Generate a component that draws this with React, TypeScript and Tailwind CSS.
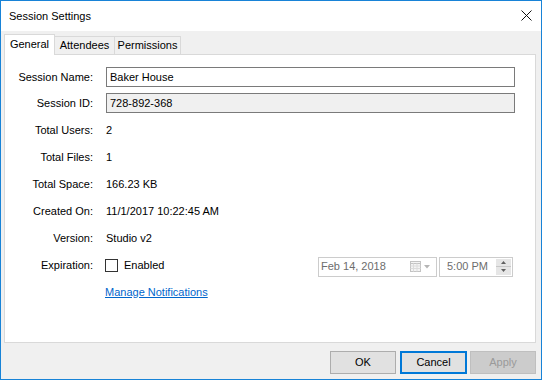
import React from "react";

const F = "font-['Liberation_Sans',Arial,sans-serif]";

function Row({ label, children, className = "" }: { label: string; children?: React.ReactNode; className?: string }) {
  return (
    <div className={`flex items-center h-[20px] ${className}`}>
      <div className="w-[88px] text-right shrink-0 leading-[20px]">{label}</div>
      <div className="ml-[13px] flex-1 flex items-center h-full">{children}</div>
    </div>
  );
}

function CalendarIcon() {
  return (
    <svg width="11" height="11" viewBox="0 0 11 11">
      <rect x="0.5" y="0.5" width="10" height="10" fill="#f4f4f4" stroke="#c3c3c3" />
      <line x1="0.5" y1="2.5" x2="10.5" y2="2.5" stroke="#c3c3c3" />
      <line x1="0.5" y1="5" x2="10.5" y2="5" stroke="#dcdcdc" />
      <line x1="0.5" y1="7.5" x2="10.5" y2="7.5" stroke="#dcdcdc" />
      <line x1="3.5" y1="2.5" x2="3.5" y2="10.5" stroke="#dcdcdc" />
      <line x1="7" y1="2.5" x2="7" y2="10.5" stroke="#dcdcdc" />
    </svg>
  );
}

export default function App() {
  return (
    <div className={`${F} text-[11px] text-black w-[542px] h-[380px] border border-[#1883d7] bg-[#f0f0f0] flex flex-col overflow-hidden`}>
      {/* Title bar */}
      <div className="h-[30px] bg-white flex items-center justify-between pl-[8px] pr-[9px] shrink-0">
        <span className="text-[11px] leading-none">Session Settings</span>
        <svg width="11" height="11" viewBox="0 0 11 11" className="mt-[-1px]">
          <line x1="0.5" y1="0.5" x2="10.5" y2="10.5" stroke="#111" strokeWidth="1" />
          <line x1="10.5" y1="0.5" x2="0.5" y2="10.5" stroke="#111" strokeWidth="1" />
        </svg>
      </div>

      {/* Tabs */}
      <div className="h-[23px] flex items-end pl-[3px] shrink-0">
        <div className="relative z-10 w-[51px] h-[21px] mb-[-1px] bg-white border-l border-t border-r border-[#d9d9d9] flex items-center justify-center pb-[2px]">
          General
        </div>
        <div className="w-[60px] h-[18px] bg-[#f0f0f0] border-t border-r border-[#d9d9d9] flex items-center justify-center">
          Attendees
        </div>
        <div className="w-[66px] h-[18px] bg-[#f0f0f0] border-t border-r border-[#d9d9d9] flex items-center justify-center">
          Permissions
        </div>
      </div>

      {/* Panel */}
      <div className="ml-[3px] w-[532px] h-[289px] bg-white border border-[#d9d9d9] shrink-0 pt-[12px] pr-[20px] flex flex-col">
        <Row label="Session Name:">
          <div className="w-full h-[20px] border border-[#7a7a7a] bg-white pl-[3px] flex items-center">Baker House</div>
        </Row>
        <Row label="Session ID:" className="mt-[6px]">
          <div className="w-full h-[20px] border border-[#7a7a7a] bg-[#f0f0f0] pl-[3px] flex items-center">728-892-368</div>
        </Row>
        <Row label="Total Users:" className="mt-[7px]">2</Row>
        <Row label="Total Files:" className="mt-[7px]">1</Row>
        <Row label="Total Space:" className="mt-[7px]">166.23 KB</Row>
        <Row label="Created On:" className="mt-[7px]">11/1/2017 10:22:45 AM</Row>
        <Row label="Version:" className="mt-[7px]">Studio v2</Row>
        <Row label="Expiration:" className="mt-[7px]">
          <div className="flex items-center ml-[-1px]">
            <div className="w-[13px] h-[13px] border border-[#333333] bg-white" />
            <span className="ml-[6px]">Enabled</span>
          </div>
          <div className="ml-auto mr-[2px] mt-[3px] flex gap-[2px]">
            <div className="w-[119px] h-[20px] border border-[#cccccc] bg-white flex items-center pl-[2px] text-[#6d6d6d]">
              <span>Feb 14, 2018</span>
              <div className="ml-auto flex items-center gap-[3px] mr-[6px]">
                <CalendarIcon />
                <svg width="6" height="4" viewBox="0 0 6 4">
                  <polygon points="0,0 6,0 3,3.5" fill="#b5b5b5" />
                </svg>
              </div>
            </div>
            <div className="w-[74px] h-[20px] border border-[#cccccc] bg-white flex items-center pl-[7px] text-[#6d6d6d]">
              <span>5:00 PM</span>
              <div className="ml-auto mr-[1px] w-[15px] h-[16px] bg-[#e6e6e6] flex flex-col">
                <div className="flex-1 flex items-center justify-center border-b border-[#c8c8c8]">
                  <svg width="5" height="3" viewBox="0 0 5 3">
                    <polygon points="0,3 5,3 2.5,0" fill="#606060" />
                  </svg>
                </div>
                <div className="flex-1 flex items-center justify-center">
                  <svg width="5" height="3" viewBox="0 0 5 3">
                    <polygon points="0,0 5,0 2.5,3" fill="#606060" />
                  </svg>
                </div>
              </div>
            </div>
          </div>
        </Row>
        <Row label="" className="mt-[7px]">
          <span className="ml-[-1px] text-[#0066cc] underline">Manage Notifications</span>
        </Row>
      </div>

      {/* Buttons */}
      <div className="flex justify-end pr-[5px] pt-[8px]">
        <div className="w-[66px] h-[23px] bg-[#e1e1e1] border border-[#adadad] flex items-center justify-center mr-[4px]">OK</div>
        <div className="w-[67px] h-[23px] bg-[#e1e1e1] border-2 border-[#0078d7] flex items-center justify-center mr-[3px]">Cancel</div>
        <div className="w-[66px] h-[23px] bg-[#cccccc] border border-[#bfbfbf] text-[#9a9a9a] flex items-center justify-center">Apply</div>
      </div>
    </div>
  );
}
